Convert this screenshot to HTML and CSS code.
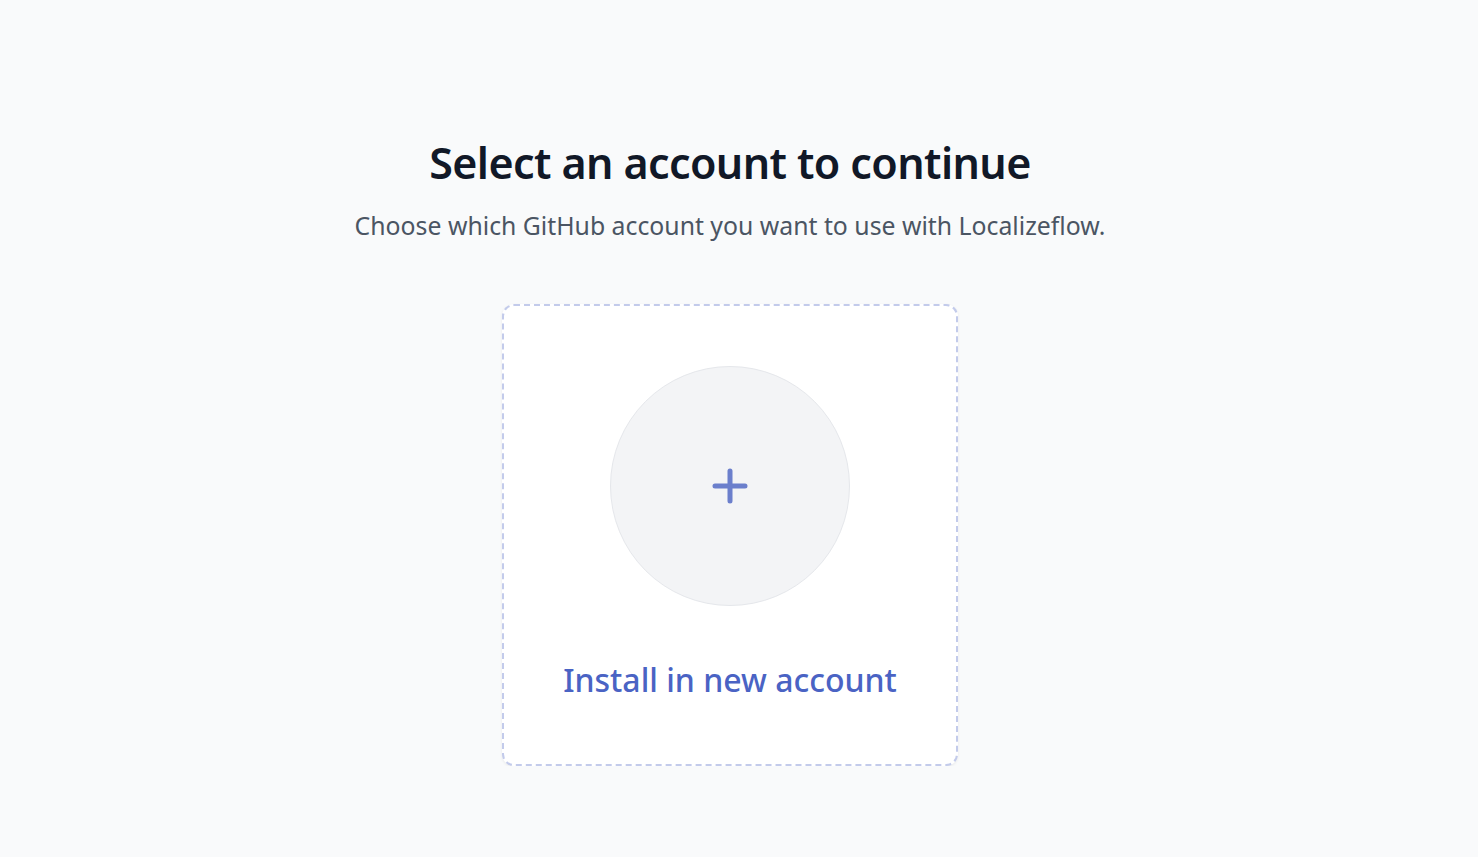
FILE: index.html
```html
<!DOCTYPE html>
<html lang="en">
<head>
<meta charset="utf-8">
<title>Select an account</title>
<link rel="stylesheet" href="styles.css">
</head>
<body>
<main class="page">
  <h1 class="title">Select an account to continue</h1>
  <p class="subtitle">Choose which GitHub account you want to use with Localizeflow.</p>
  <a class="card" href="#">
    <span class="circle">
      <svg class="plus" width="36" height="36" viewBox="0 0 36 36" aria-hidden="true">
        <path d="M18 3v30M3 18h30" stroke="#6b7fcc" stroke-width="5" stroke-linecap="round" fill="none"/>
      </svg>
    </span>
    <span class="card-label">Install in new account</span>
  </a>
</main>
</body>
</html>
```
FILE: styles.css
```css
html, body {
  margin: 0;
  padding: 0;
}
body {
  background: #f9fafb;
  font-family: "Noto Sans", "Open Sans", sans-serif;
  color: #111827;
}
.page {
  display: flex;
  flex-direction: column;
  align-items: center;
  padding-top: 133px;
  padding-right: 18px;
}
.title {
  margin: 0;
  font-size: 43px;
  font-weight: 600;
  letter-spacing: -0.6px;
  line-height: 60px;
  color: #111827;
}
.subtitle {
  margin: 16px 0 0;
  font-size: 24.8px;
  line-height: 32px;
  color: #4b5563;
}
.card {
  margin-top: 63px;
  width: 456px;
  height: 462px;
  box-sizing: border-box;
  border: 2px dashed #c3cbeb;
  border-radius: 12px;
  background: #ffffff;
  box-shadow: 0 1px 3px rgba(0,0,0,0.07);
  display: flex;
  flex-direction: column;
  align-items: center;
  padding-top: 60px;
  text-decoration: none;
}
.circle {
  width: 240px;
  height: 240px;
  box-sizing: border-box;
  border-radius: 50%;
  background: #f3f4f6;
  border: 1px solid #e5e7eb;
  display: flex;
  align-items: center;
  justify-content: center;
}
.card-label {
  margin-top: 52px;
  font-size: 32px;
  line-height: 44px;
  font-weight: 500;
  color: #4a63c4;
}
```
